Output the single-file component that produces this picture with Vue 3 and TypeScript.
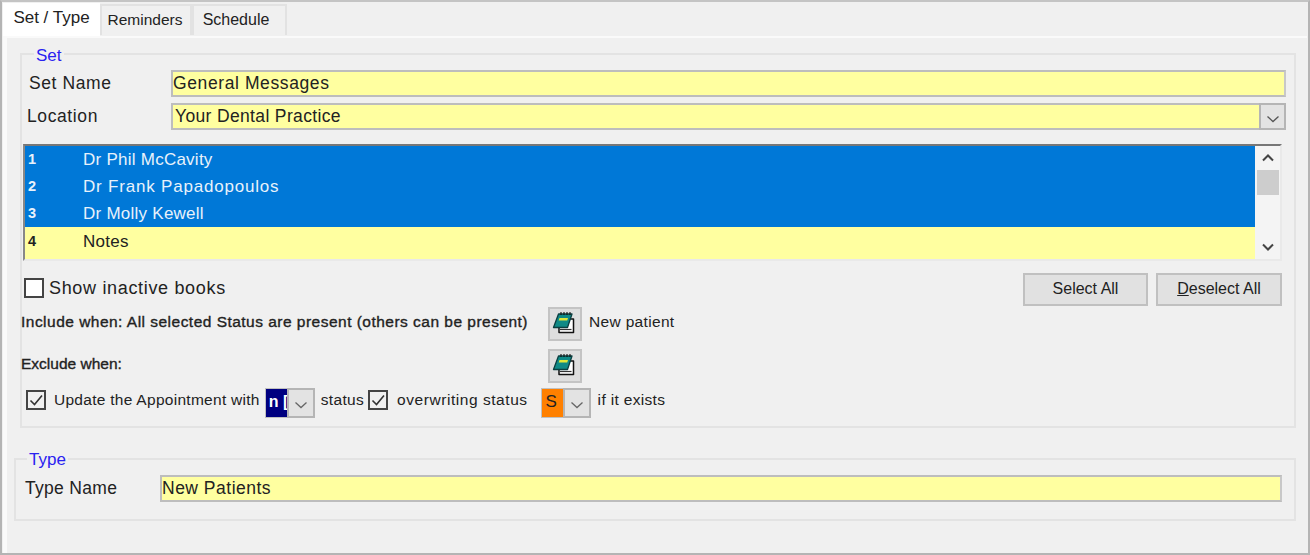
<script setup lang="ts">
interface Book { id: number; name: string; selected: boolean }
const books: Book[] = [
  { id: 1, name: 'Dr Phil McCavity', selected: true },
  { id: 2, name: 'Dr Frank Papadopoulos', selected: true },
  { id: 3, name: 'Dr Molly Kewell', selected: true },
  { id: 4, name: 'Notes', selected: false },
]
const tabs = ['Set / Type', 'Reminders', 'Schedule']
</script>

<template>
  <div class="window">
    <div class="tabs">
      <div v-for="(t, i) in tabs" :key="t" class="tab" :class="{ active: i === 0 }">{{ t }}</div>
    </div>
    <div class="page">
      <fieldset class="group set">
        <legend>Set</legend>
        <div class="row name-row">
          <label class="lab lab-name">Set Name</label>
          <div class="field">General Messages</div>
        </div>
        <div class="row loc-row">
          <label class="lab lab-loc">Location</label>
          <div class="field combo">
            <span class="combo-text">Your Dental Practice</span>
            <span class="dd big"><svg width="14" height="8" viewBox="0 0 14 8"><path d="M1.500 1.500 7 6.500l5.500-5" fill="none" stroke="#555" stroke-width="1.300"/></svg></span>
          </div>
        </div>
        <div class="list">
          <div class="items">
            <div v-for="b in books" :key="b.id" class="item" :class="{ sel: b.selected }">
              <span class="num">{{ b.id }}</span><span class="bname">{{ b.name }}</span>
            </div>
          </div>
          <div class="scroll">
            <svg class="arrow" width="14" height="9" viewBox="0 0 14 9"><path d="M2 7.500 7 2.500l5 5" fill="none" stroke="#444" stroke-width="2"/></svg>
            <div class="thumb"></div>
            <svg class="arrow down" width="14" height="9" viewBox="0 0 14 9"><path d="M2 1.500l5 5 5-5" fill="none" stroke="#444" stroke-width="2"/></svg>
          </div>
        </div>
        <div class="row inactive-row">
          <span class="check big-check"></span>
          <span class="inactive-text">Show inactive books</span>
          <span class="spacer"></span>
          <button class="btn sel-all">Select All</button>
          <button class="btn"><u>D</u>eselect All</button>
        </div>
        <div class="row cond-row">
          <span class="cond-label">Include when: All selected Status are present (others can be present)</span>
          <button class="book-btn">
            <svg width="26" height="26" viewBox="0 0 26 26">
              <path d="M18 8h3.500v13.500H7V16z" fill="#fff" stroke="#111" stroke-width="1.500" stroke-linejoin="round"/>
              <path d="M8 18.500h11.500" stroke="#333" stroke-width="1.200"/>
              <path d="M6.500 3H20l-4.500 13.500H1.500z" fill="#0f8a86" stroke="#0b3f40" stroke-width="1.300" stroke-linejoin="round"/>
              <path d="M7.500 7h8.500l-.8 2.500H6.700z" fill="#dfe83a"/>
              <path d="M9 1v3M12 1v3M15 1v3M18 1v3" stroke="#111" stroke-width="1.100"/>
            </svg>
          </button>
          <span class="small new-patient">New patient</span>
        </div>
        <div class="row cond-row excl">
          <span class="cond-label excl-label">Exclude when:</span>
          <button class="book-btn">
            <svg width="26" height="26" viewBox="0 0 26 26">
              <path d="M18 8h3.500v13.500H7V16z" fill="#fff" stroke="#111" stroke-width="1.500" stroke-linejoin="round"/>
              <path d="M8 18.500h11.500" stroke="#333" stroke-width="1.200"/>
              <path d="M6.500 3H20l-4.500 13.500H1.500z" fill="#0f8a86" stroke="#0b3f40" stroke-width="1.300" stroke-linejoin="round"/>
              <path d="M7.500 7h8.500l-.8 2.500H6.700z" fill="#dfe83a"/>
              <path d="M9 1v3M12 1v3M15 1v3M18 1v3" stroke="#111" stroke-width="1.100"/>
            </svg>
          </button>
        </div>
        <div class="row update-row">
          <span class="check tick first"><svg width="16" height="16" viewBox="0 0 16 16"><path d="M2.500 8.500 6.500 12.500 14 3.500" fill="none" stroke="#333" stroke-width="1.600"/></svg></span>
          <span class="small upd">Update the Appointment with</span>
          <span class="status-combo navy">
            <span class="swatch">n [</span>
            <span class="dd"><svg width="14" height="8" viewBox="0 0 14 8"><path d="M1.500 1.500 7 6.500l5.500-5" fill="none" stroke="#666" stroke-width="1.300"/></svg></span>
          </span>
          <span class="small st">status</span>
          <span class="check tick"><svg width="16" height="16" viewBox="0 0 16 16"><path d="M2.500 8.500 6.500 12.500 14 3.500" fill="none" stroke="#333" stroke-width="1.600"/></svg></span>
          <span class="small over">overwriting status</span>
          <span class="status-combo orange">
            <span class="swatch">S</span>
            <span class="dd"><svg width="14" height="8" viewBox="0 0 14 8"><path d="M1.500 1.500 7 6.500l5.500-5" fill="none" stroke="#666" stroke-width="1.300"/></svg></span>
          </span>
          <span class="small exists">if it exists</span>
        </div>
      </fieldset>

      <fieldset class="group type">
        <legend>Type</legend>
        <div class="row">
          <label class="lab lab-type">Type Name</label>
          <div class="field">New Patients</div>
        </div>
      </fieldset>
    </div>
  </div>
</template>

<style>
html, body { margin: 0; padding: 0; background: #f0f0f0; }
</style>

<style scoped>
.window {
  box-sizing: border-box;
  width: 1310px;
  height: 555px;
  border: 2px solid #b4b4b4;
  border-top-color: #c4c4c4;
  background: #f0f0f0;
  font-family: "Liberation Sans", Arial, sans-serif;
  color: #222;
  overflow: hidden;
  padding: 1px 0 0 1px;
  display: flex;
  flex-direction: column;
}
.tabs { display: flex; height: 33px; align-items: flex-end; position: relative; z-index: 1; }
.tab {
  box-sizing: border-box;
  height: 31px;
  margin-bottom: 1px;
  width: 92px;
  border: 2px solid #e2e2e2;
  border-bottom: none;
  background: #f0f0f0;
  font-size: 15.500px;
  display: flex;
  align-items: center;
  justify-content: center;
  padding-bottom: 2px;
}
.tab:nth-child(2) { padding-right: 2px; }
.tab:nth-child(3) { width: 95px; padding-right: 7px; font-size: 16px; }
.tab.active {
  width: 97px;
  height: 33px;
  margin-bottom: 0;
  background: #fff;
  border: none;
  padding-bottom: 3px;
  font-size: 17px;
}
.page {
  box-sizing: border-box;
  flex: 1;
  margin-right: 1px;
  border-top: 2px solid #fafafa;
  border-left: 4px solid #fafafa;
  padding: 0 0 0 7px;
}
.group {
  margin: 0;
  padding: 0;
  border: 2px solid #e3e3e3;
  min-width: 0;
  box-sizing: border-box;
}
legend {
  padding: 0 2px;
  color: #2a22f0;
  font-size: 17px;
  line-height: 20px;
  position: relative;
  top: 1px;
}
.set legend { margin-left: 12px; top: 2px; }
.set {
  margin: 6px 0 0 6px;
  width: 1276px;
  height: 384px;
}
.type {
  margin: 21px 0 0 0;
  width: 1282px;
  height: 72px;
}
.type legend { margin-left: 11px; }
.row { display: flex; align-items: center; }
.lab { font-size: 17.500px; letter-spacing: .6px; }
.field {
  box-sizing: border-box;
  border: 2px solid #bdbdbd;
  border-right-color: #c8c8c8;
  background: #ffffa0;
  height: 27px;
  font-size: 17.500px;
  letter-spacing: .6px;
  line-height: 23px;
  padding-left: 0;
  color: #222;
}
.name-row { margin-top: 6px; }
.lab-name { width: 142px; margin-left: 7px; }
.name-row .field { width: 1115px; }
.loc-row { margin-top: 6px; }
.lab-loc { width: 144px; margin-left: 5px; }
.combo { width: 1115px; display: flex; justify-content: space-between; height: 27px; padding-left: 2px; letter-spacing: .35px; }
.combo-text { flex: 1; }
.dd {
  box-sizing: border-box;
  width: 28px;
  border: 2px solid #b5b5b5;
  background: #e3e3e3;
  display: flex;
  align-items: center;
  justify-content: center;
  flex: none;
}
.dd svg { margin-top: 4px; }
.dd.big { width: 27px; margin: -2px -2px -2px 0; }
.list {
  box-sizing: border-box;
  margin: 14px 0 0 1px;
  width: 1259px;
  height: 117px;
  border-top: 2px solid #777;
  border-left: 2px solid #888;
  border-right: 2px solid #e9e9e9;
  border-bottom: 2px solid #e9e9e9;
  display: flex;
}
.items { flex: 1; background: #ffffa0; }
.item { height: 27px; display: flex; align-items: center; font-size: 17px; letter-spacing: .25px; color: #222; }
.item:nth-child(2) .bname { letter-spacing: .8px; }
.item:last-child { height: 30px; box-sizing: border-box; padding-bottom: 1px; }
.item.sel { background: #0078d7; color: #e8f2fb; }
.num { width: 58px; padding-left: 3px; box-sizing: border-box; font-weight: 700; font-size: 14.500px; letter-spacing: 0; flex: none; margin-top: -2px; }
.scroll {
  width: 25px;
  flex: none;
  background: #f4f4f4;
  display: flex;
  flex-direction: column;
  align-items: center;
  padding-top: 7px;
  box-sizing: border-box;
}
.arrow { flex: none; }
.thumb { width: 22px; height: 25px; background: #cdcdcd; margin-top: 8px; }
.arrow.down { margin-top: auto; margin-bottom: 7px; }
.inactive-row { margin: 10px 0 0 2px; width: 1258px; height: 34px; }
.check {
  box-sizing: border-box;
  width: 20px;
  height: 20px;
  border: 2px solid #444;
  background: #fff;
  flex: none;
  display: flex;
  align-items: center;
  justify-content: center;
}
.tick { background: #f0f0f0; margin-bottom: 6px; }
.inactive-text { margin-left: 5px; font-size: 18px; letter-spacing: .67px; }
.spacer { flex: 1; }
.btn {
  box-sizing: border-box;
  width: 126px;
  height: 33px;
  border: 2px solid #c0c0c0;
  background: #e1e1e1;
  font: 16px "Liberation Sans", Arial, sans-serif;
  color: #222;
  padding: 0;
  margin-left: 8px;
  margin-top: 2px;
}
.sel-all { width: 125px; }
.cond-row { height: 33px; margin-top: 2px; }
.cond-row.excl { margin-top: 9px; }
.cond-label {
  width: 527px;
  margin-left: -1px;
  margin-bottom: 4px;
  font-size: 15.500px;
  letter-spacing: .48px;
  -webkit-text-stroke: .35px #222;
  white-space: nowrap;
  flex: none;
}
.excl-label { letter-spacing: 0; }
.book-btn {
  box-sizing: border-box;
  width: 34px;
  height: 34px;
  padding: 0;
  border: 2px solid #c4c4c4;
  background: #dedede;
  display: flex;
  align-items: center;
  justify-content: center;
  flex: none;
}
.small { font-size: 15.500px; letter-spacing: .33px; white-space: nowrap; margin-bottom: 6px; }
.new-patient { margin-left: 7px; margin-bottom: 4px; }
.update-row { height: 30px; margin-top: 6px; }
.first { margin-left: 4px; }
.upd { margin-left: 8px; letter-spacing: .28px; }
.status-combo { display: flex; height: 30px; flex: none; box-sizing: border-box; }
.swatch { box-sizing: border-box; width: 22px; display: block; overflow: hidden; font-size: 16px; line-height: 26px; white-space: nowrap; padding-left: 3px; border: 1px solid #c0c0c0; border-right: none; }
.navy { margin-left: 5px; }
.navy .swatch { background: #000080; color: #fff; font-weight: 700; }
.orange .swatch { background: #ff8000; color: #222; padding-left: 4px; font-size: 17px; }
.st { margin-left: 6px; }
.st + .check { margin-left: 4px; }
.over { margin-left: 9px; letter-spacing: .55px; }
.orange { margin-left: 13px; }
.exists { margin-left: 7px; }
.type .row { margin-top: 6px; }
.lab-type { width: 135px; margin-left: 9px; letter-spacing: .3px; }
.type .field { width: 1122px; letter-spacing: .5px; }
</style>
